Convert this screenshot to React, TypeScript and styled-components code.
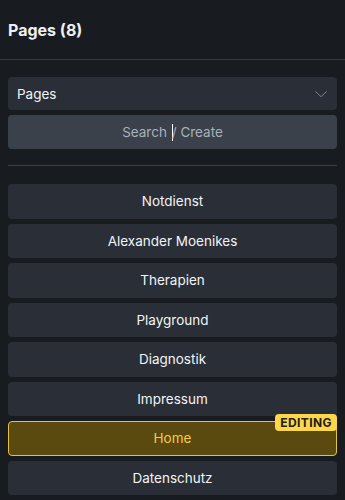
import React from 'react';
import styled, { createGlobalStyle } from 'styled-components';

const GlobalStyle = createGlobalStyle`
  html, body {
    margin: 0;
    padding: 0;
    background: #181b1f;
  }
  * { box-sizing: border-box; }
  body {
    font-family: Inter, "Noto Sans", sans-serif;
    color: #e6e8eb;
  }
`;

const Panel = styled.div`
  width: 345px;
  height: 500px;
  overflow: hidden;
  background: #181b1f;
  display: flex;
  flex-direction: column;
`;

const Header = styled.div`
  height: 60px;
  padding: 0 8px;
  display: flex;
  align-items: center;
  border-bottom: 1px solid #373c43;
  font-size: 16px;
  font-weight: 700;
  color: #eef0f2;
`;

const Body = styled.div`
  padding: 17px 8px 0;
  display: flex;
  flex-direction: column;
`;

const Select = styled.div`
  height: 33px;
  padding: 0 8px 0 9px;
  border-radius: 4px;
  background: #2a2f37;
  display: flex;
  align-items: center;
  justify-content: space-between;
  font-size: 13.5px;
  color: #f2f4f6;
`;

const Search = styled.div`
  margin-top: 5px;
  height: 34px;
  border-radius: 4px;
  background: #3a414b;
  display: flex;
  align-items: center;
  justify-content: center;
  font-size: 13.5px;
  color: #a9b0ba;
`;

const Caret = styled.span`
  display: inline-block;
  width: 1px;
  height: 17px;
  background: #ffffff;
  margin: 0 -1px 0 1px;
  vertical-align: middle;
`;

const Divider = styled.div`
  margin: 16px 0 18px;
  height: 1px;
  background: #3a404a;
`;

const List = styled.div`
  display: flex;
  flex-direction: column;
  gap: 5px;
`;

const Item = styled.div<{ $active?: boolean }>`
  position: relative;
  height: 34.5px;
  border-radius: 4px;
  display: flex;
  align-items: center;
  justify-content: center;
  font-size: 13.5px;
  background: ${p => (p.$active ? '#5a4a10' : '#2a2e36')};
  border: 1px solid ${p => (p.$active ? '#e5c23b' : 'transparent')};
  color: ${p => (p.$active ? '#f3cd45' : '#f2f4f6')};
`;

const Badge = styled.span`
  position: absolute;
  top: -8px;
  right: -1px;
  padding: 2px 5px;
  border-radius: 4px;
  background: #fdd649;
  color: #22201a;
  font-size: 12px;
  font-weight: 700;
  letter-spacing: 0.4px;
  line-height: 13px;
`;

const pages = [
  'Notdienst',
  'Alexander Moenikes',
  'Therapien',
  'Playground',
  'Diagnostik',
  'Impressum',
  'Home',
  'Datenschutz',
];

export default function App() {
  return (
    <>
      <GlobalStyle />
      <Panel>
        <Header>Pages (8)</Header>
        <Body>
          <Select>
            <span>Pages</span>
            <svg width="16" height="16" viewBox="0 0 24 24" fill="none" stroke="#7b828c" strokeWidth="1.5" strokeLinecap="round" strokeLinejoin="round">
              <path d="M4 8.5l8 7.5 8-7.5" />
            </svg>
          </Select>
          <Search>
            Search&nbsp;<Caret />/ Create
          </Search>
          <Divider />
          <List>
            {pages.map(name => (
              <Item key={name} $active={name === 'Home'}>
                {name}
                {name === 'Home' && <Badge>EDITING</Badge>}
              </Item>
            ))}
          </List>
        </Body>
      </Panel>
    </>
  );
}
